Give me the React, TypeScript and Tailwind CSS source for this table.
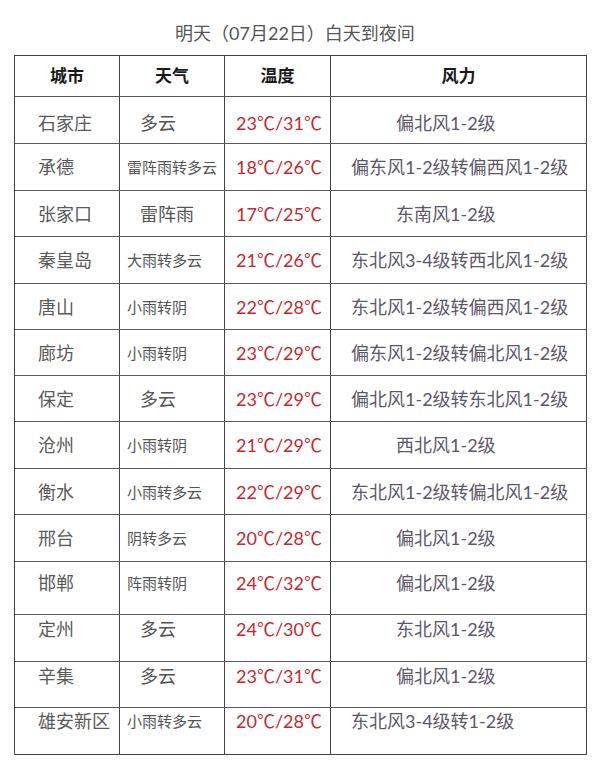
import React from "react";

interface Row {
    city: string;
    weather: string;
    big?: boolean;
    temp: string;
    wind: string;
    short?: boolean;
    h: number;
    pad?: string;
}

const rows: Row[] = [
    { city: "石家庄", weather: "多云", big: true, temp: "23℃/31℃", wind: "偏北风1-2级", short: true, h: 47, pad: "pt-[13px]" },
    { city: "承德", weather: "雷阵雨转多云", temp: "18℃/26℃", wind: "偏东风1-2级转偏西风1-2级", h: 47 },
    { city: "张家口", weather: "雷阵雨", big: true, temp: "17℃/25℃", wind: "东南风1-2级", short: true, h: 46 },
    { city: "秦皇岛", weather: "大雨转多云", temp: "21℃/26℃", wind: "东北风3-4级转西北风1-2级", h: 47 },
    { city: "唐山", weather: "小雨转阴", temp: "22℃/28℃", wind: "东北风1-2级转偏西风1-2级", h: 46 },
    { city: "廊坊", weather: "小雨转阴", temp: "23℃/29℃", wind: "偏东风1-2级转偏北风1-2级", h: 46 },
    { city: "保定", weather: "多云", big: true, temp: "23℃/29℃", wind: "偏北风1-2级转东北风1-2级", h: 46 },
    { city: "沧州", weather: "小雨转阴", temp: "21℃/29℃", wind: "西北风1-2级", short: true, h: 47 },
    { city: "衡水", weather: "小雨转多云", temp: "22℃/29℃", wind: "东北风1-2级转偏北风1-2级", h: 46 },
    { city: "邢台", weather: "阴转多云", temp: "20℃/28℃", wind: "偏北风1-2级", short: true, h: 47 },
    { city: "邯郸", weather: "阵雨转阴", temp: "24℃/32℃", wind: "偏北风1-2级", short: true, h: 53, pad: "pt-[8px]" },
    { city: "定州", weather: "多云", big: true, temp: "24℃/30℃", wind: "东北风1-2级", short: true, h: 47, pad: "pt-[1px]" },
    { city: "辛集", weather: "多云", big: true, temp: "23℃/31℃", wind: "偏北风1-2级", short: true, h: 46, pad: "pt-[1px]" },
    { city: "雄安新区", weather: "小雨转多云", temp: "20℃/28℃", wind: "东北风3-4级转1-2级", h: 46, pad: "pt-[0px]" },
];

const font = { fontFamily: "Lato, 'Noto Sans CJK SC', sans-serif" };

export default function App() {
    return (
        <div className="h-[775px] w-[600px] bg-white" style={font}>
            {/* title */}
            <div className="pr-[10px] pt-[21px] text-center text-[18px] leading-[24px] text-[#555]">
                明天（07月22日）白天到夜间
            </div>

            <div className="ml-[14px] mt-[10px] w-[573px] border border-[#444]">
                {/* header */}
                <div className="grid h-[41px] grid-cols-[104px_105px_106px_1fr] border-b border-[#555] text-[17px] font-bold text-[#1a1a1a]">
                    <div className="flex items-center justify-center">城市</div>
                    <div className="flex items-center justify-center border-l border-[#444]">天气</div>
                    <div className="flex items-center justify-center border-l border-[#444]">温度</div>
                    <div className="flex items-center justify-center border-l border-[#444]">风力</div>
                </div>

                {rows.map((r, i) => {
                    // rows with a pad are laid from the top, the rest are centred
                    const align = r.pad ? `items-start ${r.pad}` : "items-center";
                    return (
                        <div
                            key={i}
                            style={{ height: r.h }}
                            className={`grid grid-cols-[104px_105px_106px_1fr] text-[18px] leading-[26px] ${
                                i < rows.length - 1 ? "border-b border-[#5a5a5a]" : ""
                            }`}
                        >
                            <div className={`flex h-full pl-[23px] text-[#5a5a5a] ${align}`}>{r.city}</div>
                            <div
                                className={`flex h-full border-l border-[#444] text-[#555] ${align} ${
                                    r.big ? "pl-[20px] text-[18px]" : "pl-[7px] text-[15px]"
                                }`}
                            >
                                {r.weather}
                            </div>
                            <div className={`flex h-full border-l border-[#444] pl-[11px] text-[#c5282f] ${align}`}>
                                {r.temp}
                            </div>
                            <div
                                className={`flex h-full border-l border-[#444] text-[#5c566a] ${align} ${
                                    r.short ? "pl-[65px]" : "pl-[20px]"
                                }`}
                            >
                                {r.wind}
                            </div>
                        </div>
                    );
                })}
            </div>
        </div>
    );
}
